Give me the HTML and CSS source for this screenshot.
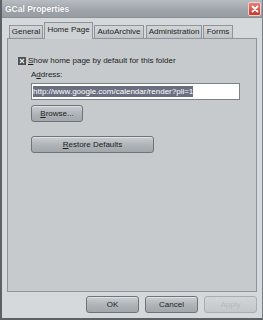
FILE: index.html
```html
<!DOCTYPE html>
<html>
<head>
<meta charset="utf-8">
<link rel="stylesheet" href="styles.css">
</head>
<body>
<div class="window">
  <div class="titlebar">
    <span class="title">GCal Properties</span>
    <span class="close"><svg width="10" height="10" viewBox="0 0 10 10"><path d="M2.5 2.5 L7.5 7.5 M7.5 2.5 L2.5 7.5" stroke="#fff" stroke-width="1.8" stroke-linecap="round"/></svg></span>
  </div>
  <div class="content">
    <div class="tabs">
      <div class="tab t-general">General</div>
      <div class="tab t-home active">Home Page</div>
      <div class="tab t-auto">AutoArchive</div>
      <div class="tab t-admin">Administration</div>
      <div class="tab t-forms">Forms</div>
    </div>
    <div class="panel">
      <div class="check-row">
        <svg class="checkbox" width="8" height="8" viewBox="0 0 8 8"><rect x="0" y="0" width="8" height="8" fill="#4d5257"/><path d="M2 2 L6 6 M6 2 L2 6" stroke="#e8eaec" stroke-width="1.2"/></svg>
        <span><u>S</u>how home page by default for this folder</span>
      </div>
      <div class="field">
        <div class="label">A<u>d</u>dress:</div>
        <div class="input"><span class="sel">http://www.google.com/calendar/render?pli=1</span></div>
        <div class="btn browse"><u>B</u>rowse...</div>
        <div class="btn restore"><u>R</u>estore Defaults</div>
      </div>
    </div>
    <div class="footer">
      <div class="btn fbtn">OK</div>
      <div class="btn fbtn">Cancel</div>
      <div class="btn fbtn disabled">Apply</div>
    </div>
  </div>
</div>
</body>
</html>
```
FILE: styles.css
```css
html, body { margin: 0; padding: 0; }
body {
  font-family: "Liberation Sans", Arial, sans-serif;
  font-size: 8px;
  color: #1c1f22;
  background: #d3d6d9;
}
.window {
  width: 263px;
  height: 320px;
  box-sizing: border-box;
  border-left: 2px solid #5c6166;
  border-right: 1px solid #7a7f85;
  border-bottom: 2px solid #5c6166;
  background: #d6d9dc;
  display: flex;
  flex-direction: column;
}
.titlebar {
  height: 17px;
  flex: none;
  display: flex;
  align-items: center;
  justify-content: space-between;
  padding: 0 1px 0 3px;
  background: linear-gradient(#b9bdc2, #9fa4aa 60%, #979ca2);
  border-bottom: 1px solid #8c9196;
}
.title {
  color: #fff;
  font-weight: bold;
  font-size: 8.5px;
  text-shadow: 0 0 1px #6d7277;
}
.close {
  width: 13px;
  height: 14px;
  box-sizing: border-box;
  border: 1px solid #f1d2cf;
  border-radius: 2px;
  background: linear-gradient(#e57f72, #c8382a);
  display: flex;
  align-items: center;
  justify-content: center;
}
.content {
  flex: 1;
  display: flex;
  flex-direction: column;
  padding: 4px 5px 0 5px;
}
.tabs {
  display: flex;
  align-items: flex-end;
  gap: 1px;
  padding-left: 2px;
  height: 17px;
  margin-bottom: -1px;
  position: relative;
  z-index: 1;
}
.tab {
  height: 14px;
  box-sizing: border-box;
  border: 1px solid #8f949a;
  background: linear-gradient(#d2d5d8, #c0c4c8);
  text-align: center;
  line-height: 12px;
  white-space: nowrap;
}
.tab.active {
  height: 17px;
  background: #cfd2d5;
  border-bottom: none;
  line-height: 13px;
}
.t-general { width: 34px; }
.t-home { width: 49px; }
.t-auto { width: 50px; }
.t-admin { width: 56px; margin-left: 1px; }
.t-forms { width: 30px; }
.panel {
  height: 254px;
  box-sizing: border-box;
  border: 1px solid #8f949a;
  background: #c6cacd;
  padding: 17px 0 0 10px;
}
.check-row {
  display: flex;
  align-items: center;
  gap: 2px;
  height: 9px;
}
.checkbox { flex: none; }
.field { margin-left: 13px; }
.label { margin-top: 4px; line-height: 11px; }
.input {
  margin-top: 3px;
  width: 209px;
  height: 17px;
  box-sizing: border-box;
  border: 1px solid #7d8288;
  background: #fff;
  padding: 2px 1px;
  line-height: 11px;
  white-space: nowrap;
  overflow: hidden;
}
.sel {
  background: #6a7081;
  color: #fff;
  padding: 1px 0;
}
.btn {
  height: 17px;
  box-sizing: border-box;
  border: 1px solid #6f747a;
  border-radius: 3px;
  background: linear-gradient(#c9cdd1, #aeb3b8 55%, #a2a7ac);
  text-align: center;
  line-height: 15px;
  box-shadow: inset 0 1px 0 #dfe2e5;
}
.browse { margin-top: 5px; width: 52px; }
.restore { margin-top: 14px; width: 123px; }
.footer {
  display: flex;
  justify-content: flex-end;
  gap: 6px;
  margin-top: 4px;
}
.fbtn { width: 53px; }
.fbtn.disabled {
  border-color: #a9adb2;
  background: linear-gradient(#d2d5d8, #c3c7cb);
  color: #b4b8bc;
  box-shadow: none;
}
```
